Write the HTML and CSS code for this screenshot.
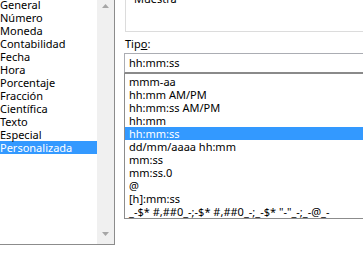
FILE: index.html
```html
<!DOCTYPE html>
<html lang="es">
<head>
<meta charset="utf-8">
<link rel="stylesheet" href="styles.css">
</head>
<body>
<div class="dialog">
  <div class="cats">
    <div class="items">
      <div class="item">General</div>
      <div class="item">Número</div>
      <div class="item">Moneda</div>
      <div class="item">Contabilidad</div>
      <div class="item">Fecha</div>
      <div class="item">Hora</div>
      <div class="item">Porcentaje</div>
      <div class="item">Fracción</div>
      <div class="item">Científica</div>
      <div class="item">Texto</div>
      <div class="item">Especial</div>
      <div class="item sel">Personalizada</div>
    </div>
    <div class="scroll">
      <svg class="arrow" width="7" height="4" viewBox="0 0 7 4"><path d="M0 4 L3.5 0 L7 4 Z" fill="#a6a6a6"/></svg>
      <svg class="arrow" width="7" height="4" viewBox="0 0 7 4"><path d="M0 0 L3.5 4 L7 0 Z" fill="#a6a6a6"/></svg>
    </div>
  </div>
  <div class="right">
    <div class="sample"><span class="sample-label">Muestra</span></div>
    <div class="tipo-label">Tip<u>o</u>:</div>
    <div class="input">hh:mm:ss</div>
    <div class="list">
      <div class="row">mmm-aa</div>
      <div class="row">hh:mm AM/PM</div>
      <div class="row">hh:mm:ss AM/PM</div>
      <div class="row">hh:mm</div>
      <div class="row sel">hh:mm:ss</div>
      <div class="row">dd/mm/aaaa hh:mm</div>
      <div class="row">mm:ss</div>
      <div class="row">mm:ss.0</div>
      <div class="row">@</div>
      <div class="row">[h]:mm:ss</div>
      <div class="row">_-$* #,##0_-;-$* #,##0_-;_-$* "-"_-;_-@_-</div>
    </div>
  </div>
</div>
</body>
</html>
```
FILE: styles.css
```css
html, body {
  margin: 0;
  padding: 0;
  background: #fff;
  overflow: hidden;
  width: 363px;
  height: 256px;
}
.dialog {
  display: flex;
  align-items: flex-start;
  font-family: "Noto Sans", "Open Sans", sans-serif;
  font-size: 11px;
  color: #000;
}
.cats {
  display: flex;
  width: 116px;
  height: 247px;
  margin-left: -3px;
  margin-top: -4px;
  border: 1px solid #8c8c8c;
  flex-shrink: 0;
}
.items {
  flex: 1;
  padding-top: 1px;
}
.item {
  height: 13px;
  line-height: 13px;
  padding-left: 2px;
  white-space: nowrap;
}
.sel {
  background: #3399ff;
  color: #fff;
}
.scroll {
  width: 17px;
  background: #f0f0f0;
  display: flex;
  flex-direction: column;
  justify-content: space-between;
  align-items: center;
  padding: 7px 0 8px;
  box-sizing: border-box;
}
.arrow {
  display: block;
}
.right {
  flex: 1;
  margin-left: 9px;
  display: flex;
  flex-direction: column;
  min-width: 0;
}
.sample {
  height: 44px;
  margin-top: -14px;
  margin-left: 1px;
  border: 1px solid #dcdcdc;
  border-right: none;
  padding-left: 8px;
}
.sample-label {
  display: block;
  line-height: 13px;
  margin-top: 5px;
}
.tipo-label {
  margin-top: 5px;
  margin-left: 1px;
  line-height: 13px;
  height: 15px;
}
.input {
  height: 18px;
  line-height: 18px;
  border: 1px solid #abadb3;
  border-bottom-color: #8a8a8a;
  border-right: none;
  padding-left: 4px;
  margin-top: 1px;
  white-space: nowrap;
}
.list {
  height: 146px;
  border: 1px solid #8c8c8c;
  border-right: none;
  border-top-color: #8a8a8a;
  padding-top: 1px;
  overflow: hidden;
  box-sizing: border-box;
}
.row {
  height: 13px;
  line-height: 13px;
  padding-left: 4px;
  white-space: nowrap;
}
```
